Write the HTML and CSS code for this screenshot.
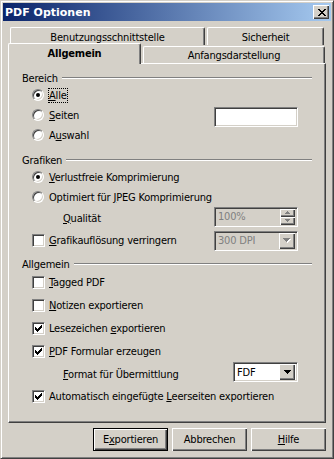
FILE: index.html
```html
<!DOCTYPE html>
<html lang="de">
<head>
    <meta charset="UTF-8">
    <title>PDF Optionen</title>
    <link rel="stylesheet" href="styles.css">
</head>
<body>
    <div class="window">
        <div class="titlebar">
            <span class="title">PDF Optionen</span>
            <span class="close">
                <svg width="8" height="7" viewBox="0 0 8 7" shape-rendering="crispEdges"><path d="M0 0h2v1h-2zM6 0h2v1h-2zM1 1h2v1h-2zM5 1h2v1h-2zM2 2h4v1h-4zM3 3h2v1h-2zM2 4h4v1h-4zM1 5h2v1h-2zM5 5h2v1h-2zM0 6h2v1h-2zM6 6h2v1h-2z" fill="#000"/></svg>
            </span>
        </div>

        <div class="tabs">
            <div class="tab-row back">
                <div class="tab tab-ui">Benutzungsschnittstelle</div>
                <div class="tab tab-security">Sicherheit</div>
            </div>
            <div class="tab-row front">
                <div class="tab tab-general active">Allgemein</div>
                <div class="tab tab-view">Anfangsdarstellung</div>
            </div>
        </div>

        <div class="panel">
            <!-- Bereich -->
            <div class="group-head first">Bereich</div>
            <div class="row radio-row">
                <span class="radio checked"></span>
                <span class="label focus"><u>A</u>lle</span>
            </div>
            <div class="row radio-row">
                <span class="radio"></span>
                <span class="label"><u>S</u>eiten</span>
                <span class="field field-pages"></span>
            </div>
            <div class="row radio-row">
                <span class="radio"></span>
                <span class="label">A<u>u</u>swahl</span>
            </div>

            <!-- Grafiken -->
            <div class="group-head">Grafiken</div>
            <div class="row radio-row">
                <span class="radio checked"></span>
                <span class="label"><u>V</u>erlustfreie Komprimierung</span>
            </div>
            <div class="row radio-row">
                <span class="radio"></span>
                <span class="label">Optimiert für <u>J</u>PEG Komprimierung</span>
            </div>
            <div class="row sub-row">
                <span class="label"><u>Q</u>ualität</span>
                <span class="field disabled spin-field">
                    <span class="value">100%</span>
                    <span class="spin">
                        <span class="spin-btn"><svg width="5" height="3" viewBox="0 0 5 3" shape-rendering="crispEdges"><path d="M2 0h1v1h-1zM1 1h3v1h-3zM0 2h5v1h-5z" fill="#808080"/></svg></span>
                        <span class="spin-btn"><svg width="5" height="3" viewBox="0 0 5 3" shape-rendering="crispEdges"><path d="M0 0h5v1h-5zM1 1h3v1h-3zM2 2h1v1h-1z" fill="#808080"/></svg></span>
                    </span>
                </span>
            </div>
            <div class="row check-row">
                <span class="check"></span>
                <span class="label"><u>G</u>rafikauflösung verringern</span>
                <span class="field disabled combo">
                    <span class="value">300 DPI</span>
                    <span class="drop-btn"><svg width="8" height="5" viewBox="0 0 8 5" shape-rendering="crispEdges"><path d="M1 1h7v1h-7zM2 2h5v1h-5zM3 3h3v1h-3zM4 4h1v1h-1z" fill="#fff"/><path d="M0 0h7v1h-7zM1 1h5v1h-5zM2 2h3v1h-3zM3 3h1v1h-1z" fill="#808080"/></svg></span>
                </span>
            </div>

            <!-- Allgemein -->
            <div class="group-head near">Allgemein</div>
            <div class="row check-row">
                <span class="check"></span>
                <span class="label"><u>T</u>agged PDF</span>
            </div>
            <div class="row check-row">
                <span class="check"></span>
                <span class="label"><u>N</u>otizen exportieren</span>
            </div>
            <div class="row check-row">
                <span class="check checked"><svg width="11" height="11" viewBox="0 0 11 11" shape-rendering="crispEdges"><path d="M2 4h1v3h-1zM3 5h1v3h-1zM4 6h1v3h-1zM5 5h1v3h-1zM6 4h1v3h-1zM7 3h1v3h-1zM8 2h1v3h-1z" fill="#000"/></svg></span>
                <span class="label">Lesezeichen <u>e</u>xportieren</span>
            </div>
            <div class="row check-row">
                <span class="check checked"><svg width="11" height="11" viewBox="0 0 11 11" shape-rendering="crispEdges"><path d="M2 4h1v3h-1zM3 5h1v3h-1zM4 6h1v3h-1zM5 5h1v3h-1zM6 4h1v3h-1zM7 3h1v3h-1zM8 2h1v3h-1z" fill="#000"/></svg></span>
                <span class="label"><u>P</u>DF Formular erzeugen</span>
            </div>
            <div class="row sub-row">
                <span class="label"><u>F</u>ormat für Übermittlung</span>
                <span class="field combo combo-format">
                    <span class="value">FDF</span>
                    <span class="drop-btn"><svg width="7" height="4" viewBox="0 0 7 4" shape-rendering="crispEdges"><path d="M0 0h7v1h-7zM1 1h5v1h-5zM2 2h3v1h-3zM3 3h1v1h-1z" fill="#000"/></svg></span>
                </span>
            </div>
            <div class="row check-row">
                <span class="check checked"><svg width="11" height="11" viewBox="0 0 11 11" shape-rendering="crispEdges"><path d="M2 4h1v3h-1zM3 5h1v3h-1zM4 6h1v3h-1zM5 5h1v3h-1zM6 4h1v3h-1zM7 3h1v3h-1zM8 2h1v3h-1z" fill="#000"/></svg></span>
                <span class="label">Automatisch eingefügte <u>L</u>eerseiten exportieren</span>
            </div>
        </div>

        <div class="buttons">
            <button class="btn default">E<u>x</u>portieren</button>
            <button class="btn">Abbrechen</button>
            <button class="btn"><u>H</u>ilfe</button>
        </div>
    </div>
</body>
</html>
```

FILE: styles.css
```css
/* Windows 2000 classic dialog */
body {
    margin: 0;
    font-family: "DejaVu Sans Condensed", "Liberation Sans", sans-serif;
    font-size: 11px;
    letter-spacing: -0.2px;
    color: #000;
}

.window {
    width: 334px;
    height: 459px;
    box-sizing: border-box;
    background: #d4d0c8;
    border: 1px solid;
    border-color: #d4d0c8 #404040 #404040 #d4d0c8;
    box-shadow: inset 1px 1px #fff, inset -1px -1px #808080;
    padding: 2px;
    display: flex;
    flex-direction: column;
}

/* Title bar */
.titlebar {
    height: 18px;
    flex-shrink: 0;
    display: flex;
    align-items: center;
    justify-content: space-between;
    padding: 0 2px 0 2px;
    background: linear-gradient(to right, #0a246a, #a6caf0);
    color: #fff;
}

.title {
    font-family: "DejaVu Sans", sans-serif;
    font-weight: bold;
    letter-spacing: 0;
}

.close {
    width: 16px;
    height: 14px;
    box-sizing: border-box;
    display: flex;
    align-items: center;
    justify-content: center;
    padding-left: 1px;
    background: #d4d0c8;
    box-shadow: inset 1px 1px #fff, inset -1px -1px #404040, inset -2px -2px #808080;
}

/* Tabs */
.tabs {
    margin: 6px 5px 0;
}

.tab-row {
    display: flex;
    gap: 2px;
}

.tab-row.back {
    height: 18px;
    padding-left: 2px;
}

.tab-row.front {
    height: 20px;
    margin-top: -2px;
    align-items: flex-end;
}

.tab {
    box-sizing: border-box;
    display: flex;
    align-items: center;
    justify-content: center;
    background: #d4d0c8;
    border-top: 1px solid #fff;
    border-left: 1px solid #fff;
    border-right: 1px solid #404040;
    border-radius: 2px 2px 0 0;
    box-shadow: inset -1px 0 #808080;
}

.tab-row.back .tab {
    height: 18px;
    padding-top: 1px;
}

.tab-ui { width: 195px; }
.tab-security { width: 117px; }
.tab-general { width: 133px; }
.tab-view { width: 182px; height: 17px; padding-top: 1px; }

.tab.active {
    height: 21px;
    margin-bottom: -1px;
    position: relative;
    z-index: 1;
    font-weight: bold;
    padding-bottom: 1px;
}

/* Panel */
.panel {
    margin: 0 5px;
    height: 360px;
    flex-shrink: 0;
    box-sizing: border-box;
    border-top: 1px solid #fff;
    border-left: 1px solid #fff;
    border-right: 1px solid #404040;
    border-bottom: 1px solid #404040;
    box-shadow: inset -1px -1px #808080;
    padding: 7px 13px 0;
    display: flex;
    flex-direction: column;
}

.group-head {
    height: 14px;
    margin-top: 8px;
    display: flex;
    align-items: center;
}

.group-head.first { margin-top: 0; }
.group-head.near { margin-top: 5px; }

.group-head::after {
    content: "";
    flex: 1;
    margin-left: 4px;
    border-top: 1px solid #808080;
    border-bottom: 1px solid #fff;
}

.row {
    display: flex;
    align-items: center;
    padding-left: 10px;
}

.radio-row { height: 20px; }
.check-row { height: 23px; }
.sub-row { height: 22px; padding-left: 41px; }

.label.focus {
    outline: 1px dotted #000;
}

/* Radio buttons */
.radio {
    width: 10px;
    height: 10px;
    margin-right: 5px;
    border: 1px solid;
    border-color: #808080 #fff #fff #808080;
    border-radius: 50%;
    background: #fff;
    box-shadow: inset 1px 1px #404040, inset -1px -1px #d4d0c8;
    display: flex;
    align-items: center;
    justify-content: center;
}

.radio.checked::after {
    content: "";
    width: 4px;
    height: 4px;
    border-radius: 50%;
    background: #000;
}

/* Check boxes */
.check {
    width: 11px;
    height: 11px;
    margin-right: 4px;
    border: 1px solid;
    border-color: #808080 #fff #fff #808080;
    background: #fff;
    box-shadow: inset 1px 1px #404040, inset -1px -1px #d4d0c8;
    display: flex;
}

/* Edit fields and combo boxes */
.field {
    margin-left: auto;
    margin-right: 14px;
    width: 84px;
    height: 20px;
    box-sizing: border-box;
    border: 1px solid;
    border-color: #808080 #fff #fff #808080;
    box-shadow: inset 1px 1px #404040, inset -1px -1px #d4d0c8;
    background: #fff;
    display: flex;
    align-items: center;
    padding: 2px;
}

.field-pages { margin-top: 3px; }
.spin-field { margin-bottom: 3px; }
.combo-format { width: 65px; margin-bottom: 4px; }

.field.disabled {
    background: #d4d0c8;
    color: #808080;
}

.field .value {
    flex: 1;
    padding-left: 1px;
}

.spin {
    width: 15px;
    height: 16px;
    display: flex;
    flex-direction: column;
}

.spin-btn,
.drop-btn {
    background: #d4d0c8;
    box-shadow: inset 1px 1px #fff, inset -1px -1px #404040, inset -2px -2px #808080;
    display: flex;
    align-items: center;
    justify-content: center;
}

.spin-btn {
    height: 8px;
}

.drop-btn {
    width: 16px;
    height: 16px;
}

/* Dialog buttons */
.buttons {
    display: flex;
    justify-content: flex-end;
    gap: 4px;
    margin: 5px 5px 0;
}

.btn {
    width: 75px;
    height: 23px;
    padding: 0;
    font: inherit;
    letter-spacing: inherit;
    color: #000;
    background: #d4d0c8;
    border: none;
    box-shadow: inset 1px 1px #fff, inset -1px -1px #404040, inset -2px -2px #808080;
}

.btn.default {
    border: 1px solid #000;
}
```
